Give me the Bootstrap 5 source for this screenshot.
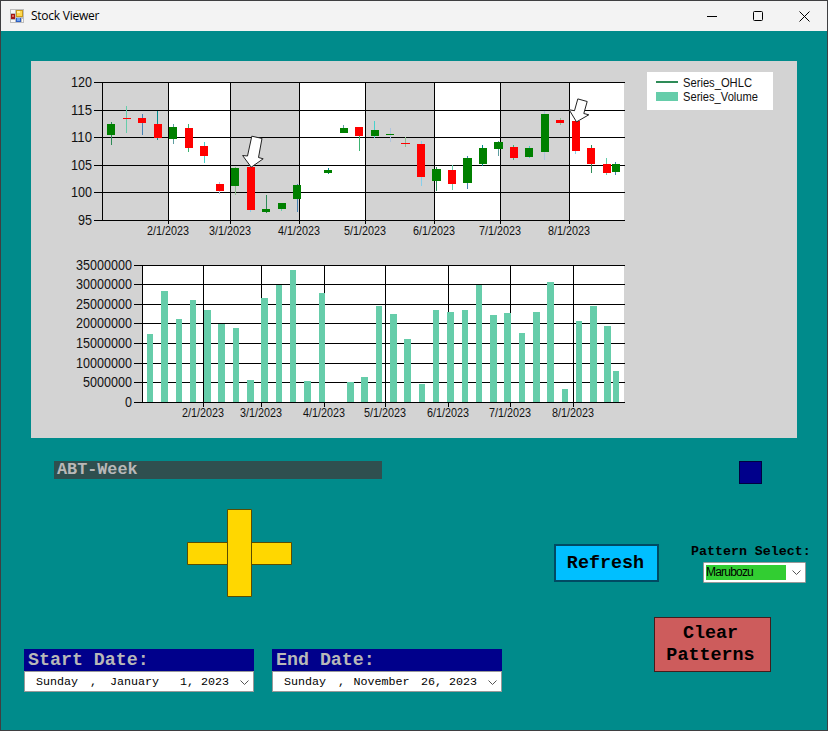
<!DOCTYPE html>
<html lang="en">
<head>
<meta charset="utf-8">
<meta name="viewport" content="width=device-width, initial-scale=1">
<title>Stock Viewer</title>
<link rel="stylesheet" href="https://cdn.jsdelivr.net/npm/bootstrap@5.3.0/dist/css/bootstrap.min.css">
<style>
body { width: 828px; height: 731px; overflow: hidden; background: #008b8b; color: #000; }
.app-window { width: 828px; height: 731px; border: 1px solid #3f3f41; }
.title-bar { height: 30px; background: #f3f3f3; padding-left: 9px; }
.title-text { font: 12px/30px "Open Sans", sans-serif; margin-left: 7px; letter-spacing: -.25px; }
.win-controls { padding-right: 17px; gap: 36px; }
.chart-panel { margin: 30px 0 0 30px; width: 766px; height: 377px; background: #d3d3d3; }
.chart-panel text { font-family: "Liberation Sans", Arial, sans-serif; fill: #111; }
.mono { font-family: "Liberation Mono", "Courier New", monospace; }
.left-pane { width: 478px; margin-left: 23px; padding-top: 23px; }
.ticker-name { width: 328px; height: 18px; margin-left: 30px; padding-left: 3px; background: #2f4f4f; color: #b8b8b8; font-size: 16.8px; line-height: 17px; }
.plus-sign { margin: 30px 0 0 163px; }
.date-row { gap: 18px; margin-top: 52px; }
.date-box { width: 230px; }
.date-head { height: 22px; padding-left: 4px; background: #00008b; color: #b8b8b8; font-size: 18.3px; line-height: 23px; }
.date-field { height: 21px; background: #fff; border: 1px solid #999; font-size: 11.7px; line-height: 21px; padding-left: 11px; }
.date-field span { white-space: pre; }
.w-day { width: 54px; } .w-sep { width: 20px; } .w-sep-s { width: 15.5px; }
.w-month { width: 70px; } .w-month-l { width: 67.5px; } .w-num { width: 21px; } .w-num-l { width: 28px; }
.right-pane { width: 325px; padding-top: 23px; }
.navy-square { width: 23px; height: 23px; margin-left: 237px; background: #00008b; border: 1px solid #000040; }
.action-row { margin: 60px 0 0 52px; }
.flat-btn { border-radius: 0; padding: 0; color: #000; font-size: 18.4px; }
.btn-refresh, .btn-refresh:hover { width: 105px; height: 38px; background: #00bfff; border: 2px solid #004a63; line-height: 33px; padding-right: 2px; color: #000; }
.pattern-box { margin-left: 32px; }
.pattern-label { font-size: 13.3px; line-height: 15px; height: 18px; white-space: nowrap; font-weight: 600; }
.combo { width: 103px; height: 21px; margin-left: 12px; background: #fff; border: 1px solid #999; border-radius: 1px; padding: 0 4px 0 2px; }
.combo-value { width: 80px; height: 15px; background: #32cd32; font: 12px/15px "Liberation Sans", Arial, sans-serif; letter-spacing: -.8px; word-spacing: 0; }
.btn-clear, .btn-clear:hover { width: 117px; height: 55px; margin: 34px 0 0 152px; background: #cd5c5c; border: 1px solid #441c1c; line-height: 22px; padding-right: 4px; color: #000; }
</style>
</head>
<body>
<div class="app-window d-flex flex-column">
  <header class="title-bar d-flex align-items-center flex-shrink-0">
    <svg width="14" height="14" viewBox="0 0 14 14" shape-rendering="crispEdges">
      <path fill="#bdbdbd" d="M0 0h14v14H0z"/><path fill="#f8f8f8" d="M1 1h4v3H1zM1 11h4v2H1zM12 10h1v3h-1z"/>
      <path fill="#c99a1c" d="M6 1h7v7H6z"/><path fill="#ffd84d" d="M7 2h5v5H7z"/><path fill="#fff0a0" d="M7 2h3v2H7z"/>
      <path fill="#a31515" d="M1 5h4v5H1z"/><path fill="#e06a5a" d="M2 6h2v2H2z"/>
      <path fill="#2d5fc4" d="M6 9h5v4H6z"/><path fill="#6fa3f0" d="M7 9h3v3H7z"/>
    </svg>
    <span class="title-text">Stock Viewer</span>
    <div class="win-controls d-flex align-items-center ms-auto">
      <svg width="10" height="11" viewBox="0 0 10 11"><path d="M0 5.5h10" stroke="#000"/></svg>
      <svg width="10" height="10" viewBox="0 0 10 10"><rect x=".5" y=".5" width="9" height="9" rx="1" fill="none" stroke="#000"/></svg>
      <svg width="11" height="11" viewBox="0 0 11 11"><path d="M.5 .5l10 10M10.5 .5l-10 10" stroke="#000"/></svg>
    </div>
  </header>

  <section class="chart-panel flex-shrink-0">
    <svg id="chart" class="d-block" width="766" height="377" viewBox="31 61 766 377"></svg>
  </section>

  <main class="d-flex mono">
    <div class="left-pane">
      <div class="ticker-name fw-bold">ABT-Week</div>
      <svg class="plus-sign d-block" width="105" height="88" viewBox="0 0 105 88">
        <g fill="#ffd700" stroke="#5a4c00"><path d="M.5 33.5h104v22H.5z"/><path d="M40.5 .5h24v87h-24z"/></g>
      </svg>
      <div class="date-row d-flex">
        <div class="date-box">
          <div class="date-head fw-bold">Start Date:</div>
          <div class="date-field d-flex">
            <span class="w-day">Sunday</span><span class="w-sep">,</span><span class="w-month">January</span><span class="w-num">1,</span><span>2023</span>
            <svg class="ms-auto me-1 mt-2" width="9" height="6" viewBox="0 0 9 6"><path d="M.5 .5l4 4 4-4" fill="none" stroke="#555"/></svg>
          </div>
        </div>
        <div class="date-box">
          <div class="date-head fw-bold">End Date:</div>
          <div class="date-field d-flex">
            <span class="w-day">Sunday</span><span class="w-sep-s">,</span><span class="w-month-l">November</span><span class="w-num-l">26,</span><span>2023</span>
            <svg class="ms-auto me-1 mt-2" width="9" height="6" viewBox="0 0 9 6"><path d="M.5 .5l4 4 4-4" fill="none" stroke="#555"/></svg>
          </div>
        </div>
      </div>
    </div>

    <div class="right-pane">
      <div class="navy-square"></div>
      <div class="action-row d-flex">
        <button class="btn flat-btn btn-refresh fw-bold">Refresh</button>
        <div class="pattern-box">
          <div class="pattern-label">Pattern Select:</div>
          <div class="combo d-flex align-items-center justify-content-between">
            <div class="combo-value">Marubozu</div>
            <svg width="9" height="6" viewBox="0 0 9 6"><path d="M.5 .5l4 4 4-4" fill="none" stroke="#555"/></svg>
          </div>
        </div>
      </div>
      <button class="btn flat-btn btn-clear fw-bold d-block">Clear<br>Patterns</button>
    </div>
  </main>
</div>

<script>
const rect = (x1, y1, x2, y2, c) => `<rect x="${x1}" y="${y1}" width="${x2 - x1}" height="${y2 - y1}" fill="${c}"/>`;
const label = (x, y, len, size, s, anchor) =>
  `<text x="${x}" y="${y}" font-size="${size}" text-anchor="${anchor}" textLength="${len}" lengthAdjust="spacingAndGlyphs">${s}</text>`;
const months = [2, 3, 4, 5, 6, 7, 8].map(m => m + '/1/2023');
let shapes = '', texts = '';

// Price area: alternating month strips, grid, ticks
const px = [168, 230, 299, 365, 434, 500, 569], py = [82, 110, 137, 165, 192, 220];
shapes += rect(102, 82, 624, 220, '#fff');
[[102, 168], [230, 299], [365, 434], [500, 569]].forEach(([a, b]) => shapes += rect(a, 82, b, 220, '#d3d3d3'));
py.forEach((y, i) => {
  shapes += rect(94, y, 625, y + 1, '#000');
  const s = String(120 - 5 * i);
  texts += label(92, y + 5, s.length * 7, 14, s, 'end');
});
shapes += rect(102, 82, 103, 221, '#000');
px.forEach((x, i) => {
  shapes += rect(x, 82, x + 1, 224, '#000');
  texts += label(x, 235, 42, 12, months[i], 'middle');
});

// Candles: left, right, open/close top and bottom, wick x, high, low, rising
const wicks = ['#2e8b57', '#66cdaa', '#4682b4', '#008b8b', '#5f9ea0', '#3cb371', '#48d1cc', '#b0c4de', '#8fbc8f', '#87ceeb'];
const candles = [
  [107,115,124,135,111,122,145,1],[123,131,118,119,126,106,133,0],[138,146,118,123,142,114,135,0],
  [154,162,124,138,157,111,140,0],[169,177,127,139,173,124,144,1],[185,193,128,148,188,124,152,0],
  [200,208,146,156,204,142,163,0],[216,224,184,191,219,182,194,0],[231,239,168,186,235,167,195,1],
  [247,255,167,210,250,167,212,0],[262,270,209,212,266,195,213,1],[278,286,203,209,281,203,211,1],
  [293,301,185,199,297,184,212,1],[324,332,170,173,328,168,174,1],[340,348,128,133,343,125,133,1],
  [355,363,127,136,359,127,151,0],[371,379,130,136,374,121,138,1],[386,394,134,135,390,128,142,1],
  [401,410,143,144,405,137,147,0],[417,425,144,177,421,141,186,0],[432,441,169,181,436,167,191,1],
  [448,456,170,184,452,165,190,0],[463,472,158,183,467,156,189,1],[479,487,148,164,482,145,166,1],
  [494,503,142,149,498,141,156,1],[510,518,147,158,513,145,160,0],[525,533,148,157,529,146,158,1],
  [541,549,114,152,544,111,160,1],[556,564,120,123,560,118,125,0],[572,580,121,151,575,121,154,0],
  [587,595,148,164,591,145,173,0],[603,611,164,173,606,158,175,0],[612,620,164,172,615,162,175,1]
];
candles.forEach(([l, r, t, b, w, h, lo, up], i) => {
  shapes += rect(w, h, w + 1, lo, wicks[i % 10]) + rect(l, t, r, b, up ? '#008000' : '#f00');
});

// Volume area
const vx = [203, 261, 324, 385, 448, 510, 573], vy = [265, 284, 304, 323, 343, 363, 382, 402];
shapes += rect(142, 265, 624, 402, '#fff');
vy.forEach((y, i) => {
  shapes += rect(134, y, 625, y + 1, '#000');
  const s = String(35000000 - 5000000 * i);
  texts += label(132, y + 5, s.length * 7, 14, s, 'end');
});
shapes += rect(142, 265, 143, 403, '#000');
vx.forEach((x, i) => {
  shapes += rect(x, 265, x + 1, 407, '#000');
  texts += label(x, 417, 42, 12, months[i], 'middle');
});
const bars = [
  [147,153,334],[161,168,291],[176,182,319],[190,196,300],[204,211,310],[218,225,324],[233,239,328],[247,254,380],
  [261,268,298],[276,282,285],[290,296,270],[304,311,381],[319,325,293],[347,354,382],[361,368,377],[376,382,306],
  [390,397,314],[404,411,339],[419,425,384],[433,439,310],[447,454,312],[462,468,310],[476,482,285],[490,497,315],
  [504,511,313],[519,525,333],[533,540,312],[547,554,282],[562,568,389],[576,582,321],[590,597,306],[604,611,326],[613,619,371]
];
bars.forEach(([l, r, t]) => shapes += rect(l, t, r, 402, '#66cdaa'));

// Legend
shapes += rect(647, 72, 773, 110, '#fff') + rect(656, 81, 678, 83, '#2e8b57') + rect(656, 92, 678, 101, '#66cdaa');
texts += label(683, 87, 69, 12, 'Series_OHLC', 'start') + label(683, 101, 75, 12, 'Series_Volume', 'start');

// Pattern arrows
const arrows = `<g fill="#fff" stroke="#222" stroke-width="1">
  <path d="M251.8 136.2L262 138.4 258.5 157.5 263.2 158.8 251.2 167.2 242.6 155.5 247.5 156z"/>
  <path d="M577.8 98.9L587.2 101.5 583.8 113.5 588.8 114.8 576.5 121.9 569.2 109.8 574.5 110.7z"/></g>`;
document.getElementById('chart').innerHTML = `<g shape-rendering="crispEdges">${shapes}</g>${arrows}${texts}`;
</script>
<script src="https://cdn.jsdelivr.net/npm/bootstrap@5.3.0/dist/js/bootstrap.bundle.min.js"></script>
</body>
</html>
